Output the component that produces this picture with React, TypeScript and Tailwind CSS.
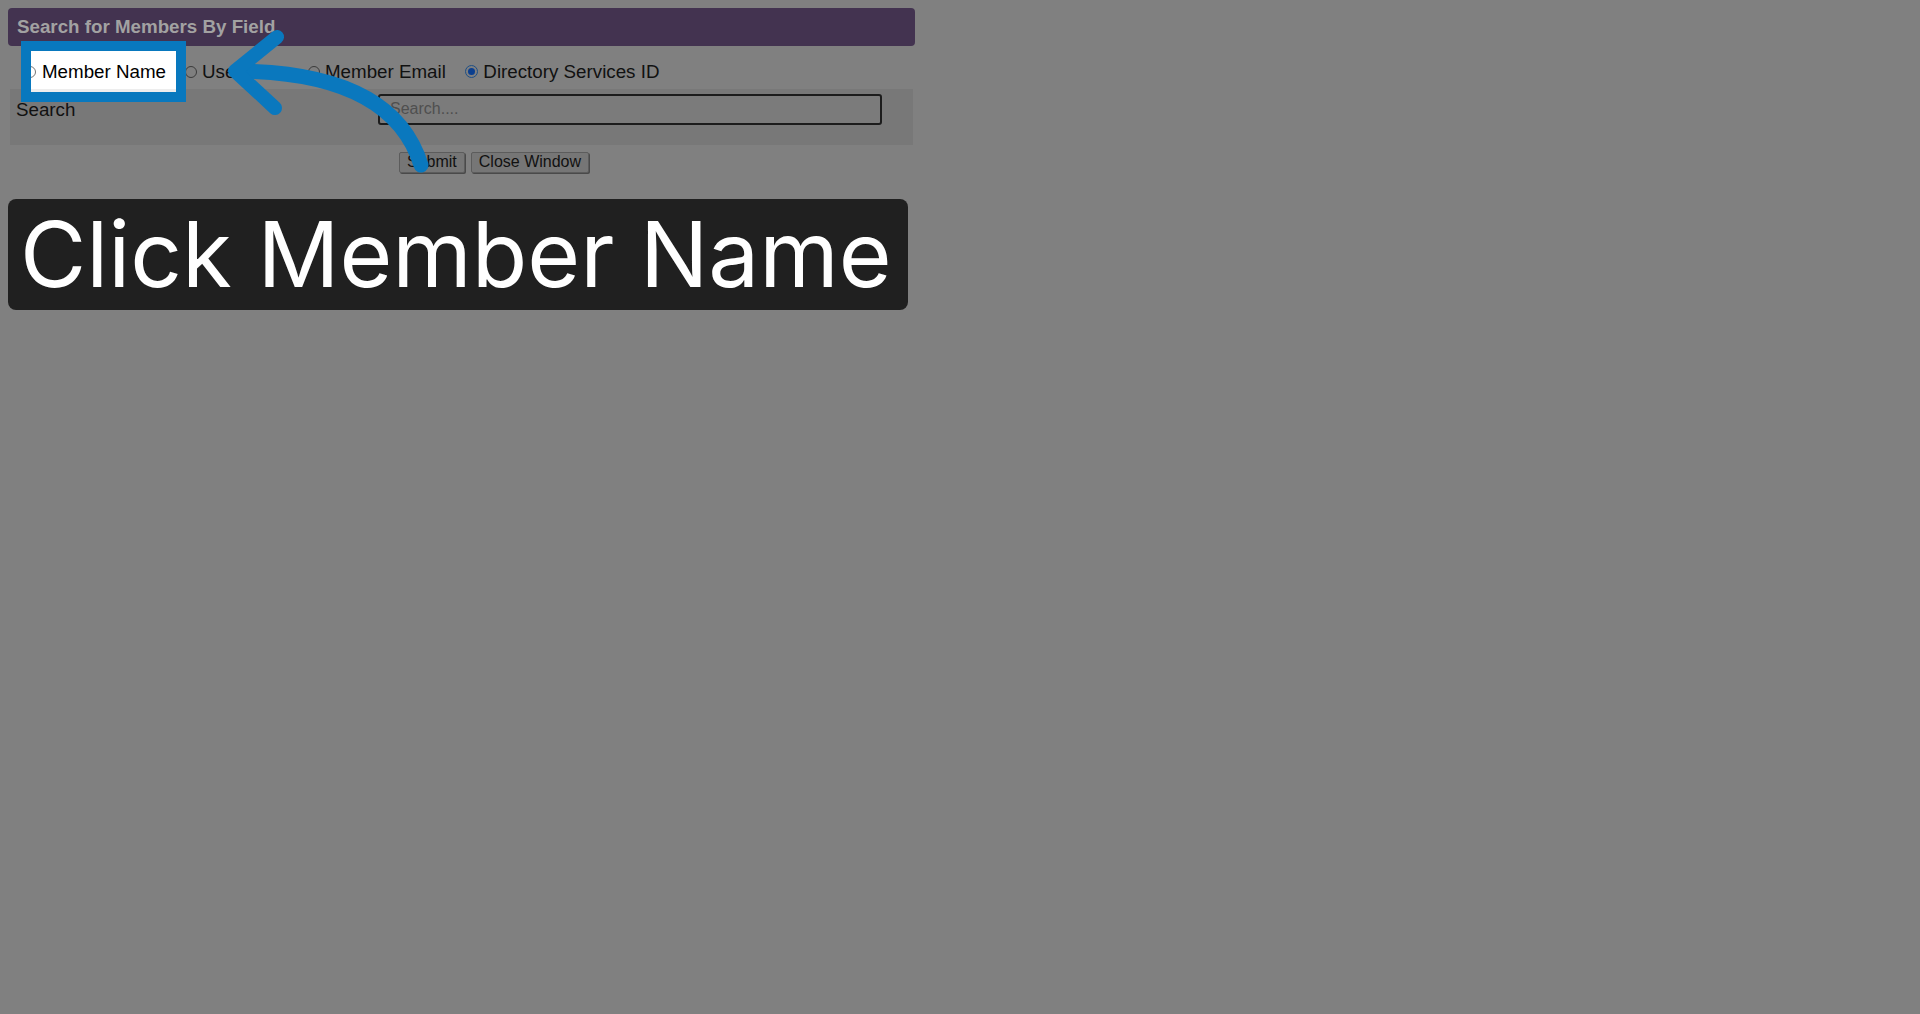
import React from "react";

// dimmed walkthrough frame: form behind a dark overlay, one spotlighted option
const options = [
    { label: "Member Name", checked: false },
    { label: "Username", checked: false },
    { label: "Member Email", checked: false },
    { label: "Directory Services ID", checked: true },
];

const Radio = ({ checked, bright }: { checked: boolean; bright?: boolean }) =>
    checked ? (
        <span className="flex h-[13px] w-[13px] shrink-0 items-center justify-center rounded-full border border-[#1e4f86] bg-[#7f7f7f]">
            <span className="h-[7px] w-[7px] rounded-full bg-[#0b3f8f]" />
        </span>
    ) : (
        <span
            className={`h-[12px] w-[12px] shrink-0 rounded-full border ${bright ? "border-[#767676] bg-white" : "border-[#3b3b3b] bg-[#7f7f7f]"}`}
        />
    );

export default function App() {
    return (
        <div className="relative min-h-[1014px] w-full bg-[#808080] font-['Liberation_Sans',Arial,sans-serif] leading-[1.15] text-[#111]">
            <div className="w-[923px] p-2">
                {/* header */}
                <div className="flex h-[38px] items-center rounded-[4px] bg-[#433350] pl-[9px] text-[18.75px] font-bold text-[#a2a2a2]">
                    Search for Members By Field
                </div>

                {/* search type radios */}
                <div className="mt-[15px] flex items-center gap-[19px] pl-[16px] text-[18.75px]">
                    {options.map((o) => (
                        <label key={o.label} className="flex items-center gap-[5.5px]">
                            <Radio checked={o.checked} />
                            <span>{o.label}</span>
                        </label>
                    ))}
                </div>

                {/* search row */}
                <div className="mx-[2px] mt-[6px] flex h-[56px] bg-[#787878]">
                    <div className="w-[368px] pl-[6px] pt-[10px] text-[18.75px]">Search</div>
                    <div className="mt-[5px] flex h-[31px] w-[504px] items-center rounded-[3px] border-2 border-[#1c1c1c] bg-[#7b7b7b] pl-[10px] text-[16px] text-[#4f4f4f]">
                        Search....
                    </div>
                </div>

                {/* buttons */}
                <div className="mt-[7px] flex gap-[6px] pl-[391px]">
                    <button className="h-[21px] rounded-[2px] border border-[#5c5c5c] bg-[#767676] px-[7px] text-[16px] leading-none text-[#111] shadow-[1px_1px_0_#4a4a4a]">
                        Submit
                    </button>
                    <button className="h-[21px] rounded-[2px] border border-[#5c5c5c] bg-[#767676] px-[7px] text-[16px] leading-none text-[#111] shadow-[1px_1px_0_#4a4a4a]">
                        Close Window
                    </button>
                </div>

                {/* caption */}
                <div className="mt-[26px] flex h-[111px] w-[900px] items-center whitespace-nowrap rounded-[8px] bg-[#202020] pl-[12px] font-['Inter',sans-serif] text-[90.75px] leading-none text-white">
                    Click Member Name
                </div>
            </div>

            {/* spotlight on the first option */}
            <div className="absolute left-[21px] top-[41px] h-[61px] w-[165px] overflow-hidden border-[10px] border-[#0878be] bg-white">
                <div className="-ml-[7px] mt-[10px] flex items-center gap-[6px] text-[18.75px] text-black">
                    <Radio checked={false} bright />
                    <span>Member Name</span>
                </div>
                <div className="absolute bottom-0 left-0 h-[3px] w-full bg-[#ededed]" />
            </div>

            {/* pointer arrow */}
            <svg className="pointer-events-none absolute left-0 top-0" width="500" height="200" viewBox="0 0 500 200" fill="none">
                <path d="M421 165 C404 110 352 72 238 71" stroke="#0a78be" strokeWidth="15" strokeLinecap="round" />
                <path d="M277 37 L235 71 L275 108" stroke="#0a78be" strokeWidth="14" strokeLinecap="round" strokeLinejoin="round" />
            </svg>
        </div>
    );
}
